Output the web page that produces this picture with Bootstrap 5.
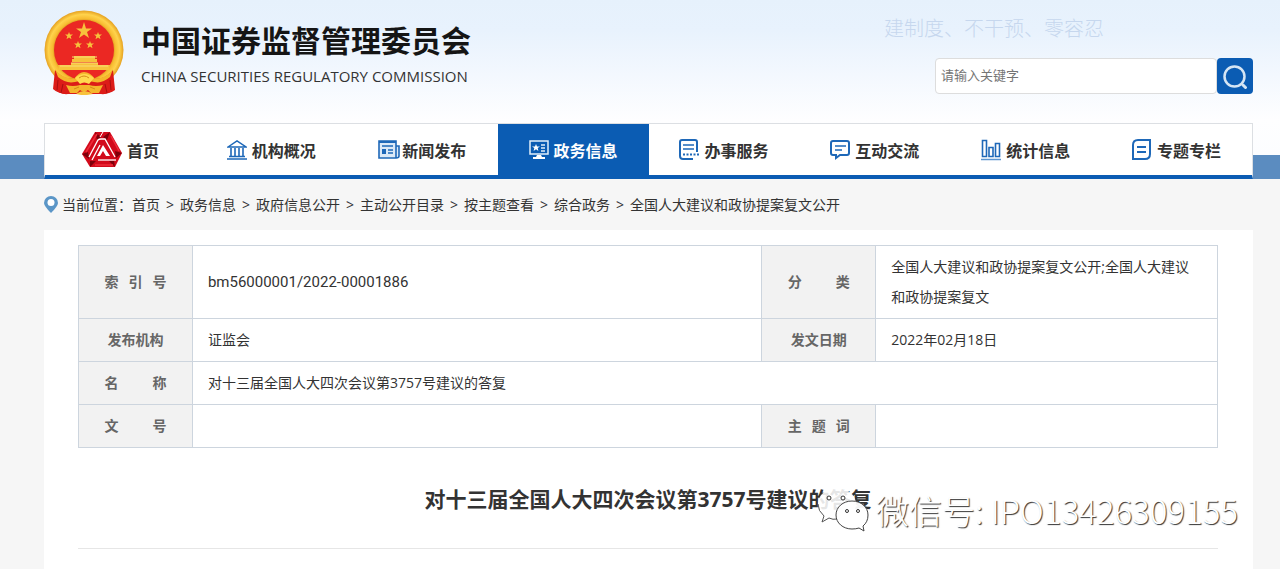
<!DOCTYPE html>
<html lang="zh-CN">
<head>
<meta charset="utf-8">
<meta name="viewport" content="width=device-width, initial-scale=1">
<title>中国证券监督管理委员会</title>
<link rel="stylesheet" href="https://cdn.jsdelivr.net/npm/bootstrap@5.3.0/dist/css/bootstrap.min.css">
<style>
body{font-family:"Open Sans","Noto Sans CJK SC",sans-serif;font-size:14px;color:#333;background:#f6f6f6}
.page-x{padding-left:44px;padding-right:27px}
.site-head{background:linear-gradient(#e6f1fc 0,#e8f2fd 30px,#fefeff 120px,#fcfdff 155px,#5b8cc0 155px)}
.brand-row{height:123px}
.emblem{margin-top:10px}
.org{padding:17px 0 0 17px}
.org-name{font-family:"Noto Sans CJK SC",sans-serif;font-size:30px;line-height:44px;font-weight:700;color:#151515}
.org-en{font-size:15px;line-height:30px;color:#333}
.slogan{font-family:"Noto Sans CJK SC",sans-serif;font-size:20px;line-height:28px;font-weight:300;color:#c6d7ee;padding:14px 149px 0 0}
.search-box{width:318px}
.search-box .form-control{height:36px;font-size:13px;line-height:24px;padding:0 5px 2px;border:1px solid #ddd;border-radius:4px;color:#555}
.search-box .form-control::placeholder{color:#757575}
.search-box .btn{width:36px;height:36px;background:#0b5cb3;border-radius:4px}
.main-nav{background:#fff;border:1px solid #dcdfe3;border-bottom:4px solid #0b5cb3}
.main-nav .nav-link{height:51px;gap:5px;color:#333;font-size:16px;font-weight:700;font-family:"Noto Sans CJK SC",sans-serif}
.main-nav .nav-link.active{background:#0b5cb3;color:#fff}
.main-nav .nav-link.snug{gap:2px}
.line-icon{fill:none;stroke:#1e68b8;stroke-width:2}
.crumbs{height:51px}
.crumbs .breadcrumb-item+.breadcrumb-item{padding-left:6px}
.crumbs .breadcrumb-item+.breadcrumb-item::before{content:">";padding-right:6px;color:#333}
.crumbs a{color:#333}
.sheet{background:#fff;padding:15px 35px 20px 34px}
.info-table{table-layout:fixed;line-height:30px;border-color:#cdd5de;color:#333}
.info-table th,.info-table td{border:1px solid #cdd5de;padding:6px 15px;height:43px;vertical-align:middle}
.info-table th{background:#f2f2f2;color:#666;text-align:center;padding:6px 0}
.spread{display:inline-block;width:62px;text-align-last:justify;vertical-align:top}
.code{font-family:Roboto,sans-serif;font-size:15px}
.doc-title{font-size:21px;line-height:30px;font-weight:700;padding:36px 0 34px;border-bottom:1px solid #e6e6e6}
.wm{position:absolute;right:-20px;top:39px;gap:7px;font-family:"Noto Sans CJK SC",sans-serif;font-size:33px;line-height:46px;font-weight:300;color:#fff;text-shadow:1px 1px 1px #333}
</style>
</head>
<body class="min-vh-100 d-flex flex-column">
<header class="site-head page-x">
  <div class="brand-row d-flex justify-content-between">
    <a href="#" class="d-flex align-items-start text-decoration-none">
      <svg class="emblem" width="80" height="86" viewBox="0 0 80 86" aria-hidden="true">
        <defs><radialGradient id="gold"><stop offset=".72" stop-color="#d18a18"/><stop offset=".8" stop-color="#f8bd32"/><stop offset=".9" stop-color="#ffd34c"/><stop offset="1" stop-color="#e5a01f"/></radialGradient></defs>
        <path d="M13 57 10 78Q16 85 24 84L30 77 51 77 57 84Q65 85 70 78L68 57Z" fill="#db1b18"/>
        <circle cx="40" cy="40" r="39.500" fill="url(#gold)"/>
        <circle cx="40" cy="40" r="30" fill="#eb2823"/>
        <g fill="#f7c23c">
          <path d="M40 12 42 18.400 48 18.400 43 22 45 28 40 24.500 35 28 37 22 32 18.400 38 18.400Z"/>
          <path d="M25 22l1 2.500h3l-2.300 1.800.8 3-2.500-1.700-2.500 1.700.8-3L21 24.500h3ZM54 22l1 2.500h3l-2.300 1.800.8 3-2.500-1.700-2.500 1.700.8-3L50 24.500h3ZM34 31l1 2.500h3l-2.300 1.800.8 3-2.500-1.700-2.500 1.700.8-3L30 33.500h3ZM46 31l1 2.500h3l-2.300 1.800.8 3-2.500-1.700-2.500 1.700.8-3L42 33.500h3Z"/>
          <path d="M30 46h21v3h2v3H28v-3h2ZM27 53h27v2h12l-1 5H15l-1-5h13Z"/>
        </g>
        <path d="M28 47h25M27 53h27M16 56h48" stroke="#f9de76" stroke-width="1"/>
        <path d="M11 60Q18 69 30 69Q34 63 40 63 46 63 51 69 62 69 69 60L71 80Q66 84 57 84H24Q14 84 9 79Z" fill="#dc1c18"/>
        <path d="M11 59Q17 68 30 69Q35 62 40 62 46 62 51 69 63 68 69 59L66 67Q58 74 50 72L40 70 31 72Q22 74 14 67Z" fill="#f4b62c"/>
        <path d="M22 75Q29 77 36 75H45Q52 77 59 75L55 83H47L44 80Q40 83 36 80L33 83H26Z" fill="#f4b62c"/>
        <path d="M31 68Q40 60 50 68L45 74Q40 71 36 74Z" fill="#ffda4f"/>
        <path d="M35 68q5-4 10 0M30 79l5-2M51 79l-5-2" fill="none" stroke="#d68a18"/>
        <path d="M14 70l-1 10M19 74l-2 9M66 70l1 10M61 74l2 9" stroke="#a90e10"/>
        <path d="M32 84Q40 78 49 84L43 85H37Z" fill="#f7c23c"/>
      </svg>
      <span class="org d-flex flex-column">
        <span class="org-name">中国证券监督管理委员会</span>
        <span class="org-en">CHINA SECURITIES REGULATORY COMMISSION</span>
      </span>
    </a>
    <div class="d-flex flex-column align-items-end">
      <div class="slogan mb-3">建制度、不干预、零容忍</div>
      <form class="search-box d-flex" role="search">
        <input type="text" class="form-control" placeholder="请输入关键字" aria-label="请输入关键字">
        <button type="button" class="btn p-0 flex-shrink-0 d-flex align-items-center justify-content-center" aria-label="搜索"><svg width="26" height="26" viewBox="0 0 26 26" fill="none" stroke="#d5e5f4" stroke-width="2.500"><circle cx="12.500" cy="13.500" r="10"/><path d="m21 22 2.500 2.500" stroke-width="3" stroke-linecap="round"/></svg></button>
      </form>
    </div>
  </div>
  <nav class="main-nav">
    <ul class="nav nav-fill flex-nowrap">
      <li class="nav-item w-100"><a class="nav-link p-0 d-flex align-items-center justify-content-center" href="#">
        <svg width="40" height="36" viewBox="0 0 40 36" aria-hidden="true">
          <path d="M13 0H28L40 21 33 35H8L0 22Z" fill="#d20a1b"/>
          <path d="M13 0 19 5 15 8ZM28 0 21 5 25 8ZM0 22 6 20 7 27ZM40 21 33 19 34 26ZM8 35 14 29H8ZM33 35 27 29H32Z" fill="#7d000a"/>
          <path d="M15 2 4 20M29 4l8 15M13 33h18" stroke="#ee2c3a" stroke-width="1.500"/>
          <path d="M7 25 16 8Q17 7 19 7H23L33 25M10 28l8-15" fill="none" stroke="#fff" stroke-width="1.300"/>
          <path d="M21 13 28 24H24L21 19 18 24H15Z" fill="#fff"/>
          <path d="M16 28H34" stroke="#fff" stroke-width="1.300"/>
          <path d="M21 0l-3 5" stroke="#fff"/>
        </svg>首页</a></li>
      <li class="nav-item w-100"><a class="nav-link p-0 d-flex align-items-center justify-content-center" href="#">
        <svg class="line-icon" width="20" height="20" viewBox="0 0 20 20"><path d="M1 7 10 1l9 6Z" stroke-width="1.500"/><path d="M4 8v9M8 8v9M12 8v9M16 8v9M2 16.500h16M0 19h20" stroke-width="1.600"/></svg>机构概况</a></li>
      <li class="nav-item w-100"><a class="nav-link snug p-0 d-flex align-items-center justify-content-center" href="#">
        <svg class="line-icon" width="22" height="20" viewBox="0 0 22 20"><path d="M1 1h17v17H1ZM18 6h3v10q0 2-3 2" fill="#dbe9f7" stroke-width="1.600"/><path d="M1 2h17" stroke-width="2"/><path d="M4 6h11M10 10h5M10 13h5" stroke-width="1.300"/><path d="M4 9h4v5H4Z" fill="#1e68b8" stroke="none"/></svg>新闻发布</a></li>
      <li class="nav-item w-100"><a class="nav-link active p-0 d-flex align-items-center justify-content-center" aria-current="page" href="#">
        <svg width="20" height="20" viewBox="0 0 20 20" fill="none" stroke="#e2eefa" stroke-width="1.500"><path d="M1 1h18v13H1Z"/><path d="m7 4 1 2.500h3L8.700 8l.7 3L7 9.300 4.600 11l.7-3L3 6.500h3Z" fill="#fff" stroke="none"/><path d="M12 5h4M12 8h4M12 11h4"/><path d="M8 15h4l1 2h3v2H4v-2h3Z" fill="#fff" stroke="none"/></svg>政务信息</a></li>
      <li class="nav-item w-100"><a class="nav-link p-0 d-flex align-items-center justify-content-center" href="#">
        <svg class="line-icon" width="20" height="22" viewBox="0 0 20 22"><path d="M18 13V3q0-2-2-2H3Q1 1 1 3v14q0 3 3 3h10"/><path d="M4 6h11M4 10h11" stroke-width="1.600"/><path d="M4 15.500h16" stroke-dasharray="2 1.500"/></svg>办事服务</a></li>
      <li class="nav-item w-100"><a class="nav-link p-0 d-flex align-items-center justify-content-center" href="#">
        <svg class="line-icon" width="20" height="20" viewBox="0 0 20 20"><path d="M3 1h14q2 0 2 2v10q0 2-2 2h-7l-4 3v-3H3q-2 0-2-2V3q0-2 2-2Z"/><path d="M5 6h11M5 10h7" stroke-width="1.500"/></svg>互动交流</a></li>
      <li class="nav-item w-100"><a class="nav-link p-0 d-flex align-items-center justify-content-center" href="#">
        <svg class="line-icon" width="20" height="22" viewBox="0 0 20 22"><path d="M1.500 1.500h4v16h-4ZM8 8.500h4v9H8ZM14.500 4.500h4v13h-4Z" stroke-width="1.600"/><path d="M0 20.500h20" stroke="#5c95d0" stroke-width="1.500"/></svg>统计信息</a></li>
      <li class="nav-item w-100"><a class="nav-link p-0 d-flex align-items-center justify-content-center" href="#">
        <svg class="line-icon" width="20" height="22" viewBox="0 0 20 22"><path d="M6 1h12v14q0 5-5 5H1V6q0-5 5-5Z"/><path d="M5 8h9M5 13h9"/></svg>专题专栏</a></li>
    </ul>
  </nav>
</header>
<nav class="crumbs page-x d-flex align-items-center" aria-label="当前位置">
  <svg class="me-1 flex-shrink-0" width="14" height="17" viewBox="0 0 14 17"><path d="M7 17Q0 10 0 7a7 7 0 1 1 14 0Q14 10 7 17Z" fill="#5b96c7"/><circle cx="7" cy="6.500" r="3.500" fill="#fff"/></svg>
  <span>当前位置：</span>
  <ol class="breadcrumb mb-0">
    <li class="breadcrumb-item"><a class="text-decoration-none" href="#">首页</a></li>
    <li class="breadcrumb-item"><a class="text-decoration-none" href="#">政务信息</a></li>
    <li class="breadcrumb-item"><a class="text-decoration-none" href="#">政府信息公开</a></li>
    <li class="breadcrumb-item"><a class="text-decoration-none" href="#">主动公开目录</a></li>
    <li class="breadcrumb-item"><a class="text-decoration-none" href="#">按主题查看</a></li>
    <li class="breadcrumb-item"><a class="text-decoration-none" href="#">综合政务</a></li>
    <li class="breadcrumb-item"><a class="text-decoration-none" href="#">全国人大建议和政协提案复文公开</a></li>
  </ol>
</nav>
<main class="page-x flex-grow-1 d-flex flex-column">
  <article class="sheet flex-grow-1">
    <table class="info-table w-100">
      <colgroup><col style="width:10%"><col style="width:50%"><col style="width:10%"><col style="width:30%"></colgroup>
      <tbody>
        <tr><th scope="row"><span class="spread">索 引 号</span></th><td class="code">bm56000001/2022-00001886</td><th scope="row"><span class="spread">分 类</span></th><td>全国人大建议和政协提案复文公开;全国人大建议和政协提案复文</td></tr>
        <tr><th scope="row">发布机构</th><td>证监会</td><th scope="row">发文日期</th><td>2022年02月18日</td></tr>
        <tr><th scope="row"><span class="spread">名 称</span></th><td colspan="3">对十三届全国人大四次会议第3757号建议的答复</td></tr>
        <tr><th scope="row"><span class="spread">文 号</span></th><td></td><th scope="row"><span class="spread">主 题 词</span></th><td></td></tr>
      </tbody>
    </table>
    <div class="position-relative">
      <h1 class="doc-title text-center mb-0">对十三届全国人大四次会议第3757号建议的答复</h1>
      <div class="wm d-flex align-items-center text-nowrap">
        <svg width="52" height="46" viewBox="0 0 52 46" aria-hidden="true"><path d="M20 1C9 1 1 8 1 17q0 7 6 12l-2 6 7-4q5 2 10 1 17-2 17-15C39 8 31 1 20 1Z" fill="#fff" fill-opacity=".88"/><path d="M1 17q0 7 6 12l-2 6 7-4q4 2 8 1" fill="none" stroke="#555"/><path d="M35 14c-9 0-16 6-16 14s7 14 16 14q4 0 7-1l5 3-1-5q5-4 5-11c0-8-7-14-16-14Z" fill="#fff" fill-opacity=".94" stroke="#444"/><g fill="#fff" stroke="#333"><circle cx="12" cy="11" r="2"/><circle cx="26" cy="11" r="2"/><circle cx="30" cy="24" r="1.500"/><circle cx="41" cy="24" r="1.500"/></g></svg>
        <span>微信号: IPO13426309155</span>
      </div>
    </div>
  </article>
</main>
<script src="https://cdn.jsdelivr.net/npm/bootstrap@5.3.0/dist/js/bootstrap.bundle.min.js"></script>
</body>
</html>
